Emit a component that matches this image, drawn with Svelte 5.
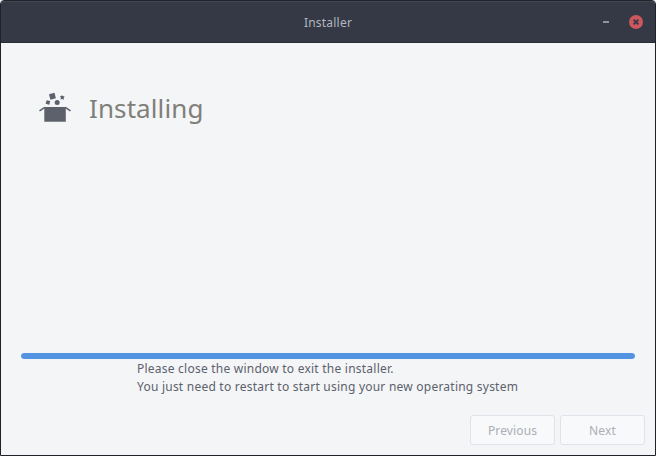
<script>
  const messages = [
    'Please close the window to exit the installer.',
    'You just need to restart to start using your new operating system'
  ];
  const progress = 100;
</script>

<div class="window">
  <header>
    <span class="title">Installer</span>
    <div class="controls">
      <button class="minimize" aria-label="Minimize"></button>
      <button class="close" aria-label="Close">
        <svg width="14" height="14" viewBox="0 0 14 14">
          <circle cx="7" cy="7" r="7" fill="#cc575d" />
          <path d="M4.6 4.6 9.4 9.4M9.4 4.6 4.6 9.4" stroke="#363a47" stroke-width="1.9" />
        </svg>
      </button>
    </div>
  </header>
  <main>
    <div class="heading">
      <svg width="32" height="32" viewBox="0 0 32 32" fill="#5c616c">
        <path d="M5.3 15h21.5v14.7H5.3z" />
        <path d="M5.8 15.4.5 18.9M26.3 15.4l5.2 3.5" stroke="#5c616c" stroke-width="1.5" fill="none" />
        <path d="m10 2.2 5.5-1.4 1.4 5.4-5.5 1.5z" />
        <path d="m22.7 2.7 1.1 1.4 1.8.3-.9 1.5.2 1.9-1.6-.8-1.8.4.4-1.8-1-1.5 1.8-.1z" />
        <path d="m7.6 8.3 3.6.8-.8 3.7-3.8-1z" />
        <circle cx="18.2" cy="10.6" r="2.5" />
      </svg>
      <h1>Installing</h1>
    </div>
    <div class="track"><div class="bar" style="width: {progress}%"></div></div>
    <div class="messages">
      {#each messages as message}
        <p>{message}</p>
      {/each}
    </div>
    <footer>
      <button class="nav" disabled>Previous</button>
      <button class="nav" disabled>Next</button>
    </footer>
  </main>
</div>

<style>
  .window {
    box-sizing: border-box;
    width: 656px;
    height: 456px;
    border: 1px solid #20212a;
    border-radius: 4px 4px 0 0;
    display: flex;
    flex-direction: column;
    overflow: hidden;
    font-family: "Noto Sans", "Open Sans", sans-serif;
    font-size: 12px;
    color: #5c616c;
    background: #f4f5f7;
  }
  header {
    box-sizing: border-box;
    flex: 0 0 42px;
    display: grid;
    grid-template-columns: 1fr auto 1fr;
    align-items: center;
    background: #353945;
    border-top: 1px solid #434754;
    border-bottom: 1px solid #2b2e39;
    color: #b2b6c0;
  }
  .title { grid-column: 2; letter-spacing: 0.22px; padding-top: 1px; }
  .controls {
    justify-self: end;
    display: flex;
    align-items: center;
    gap: 20px;
    padding-right: 12px;
  }
  button { font: inherit; padding: 0; border: 0; background: none; }
  .minimize { width: 6px; height: 2px; background: #90939d; }
  .close { width: 14px; height: 14px; }
  .close svg { display: block; }
  main { flex: 1; display: flex; flex-direction: column; }
  .heading {
    height: 310px;
    box-sizing: border-box;
    padding: 49px 0 0 38px;
    display: flex;
    align-items: flex-start;
    gap: 18px;
  }
  h1 {
    margin: 0;
    font-size: 26px;
    line-height: 32px;
    font-weight: 400;
    letter-spacing: 0.1px;
    color: #807f7a;
  }
  .track { height: 6px; margin: 0 20px; border-radius: 3px; overflow: hidden; background: #cfd6e6; }
  .bar { height: 100%; border-radius: 3px; background: #5294e2; }
  .messages { padding: 1px 0 0 136px; letter-spacing: 0.23px; }
  p { margin: 0; height: 18px; line-height: 18px; white-space: nowrap; }
  footer { margin-top: auto; display: flex; justify-content: flex-end; gap: 5px; padding: 0 10px 10px; }
  .nav {
    box-sizing: border-box;
    width: 85px;
    height: 30px;
    border: 1px solid #dfe1eb;
    border-radius: 3px;
    background: #f8f9fb;
    color: #abaeb4;
    letter-spacing: 0.13px;
  }
</style>
